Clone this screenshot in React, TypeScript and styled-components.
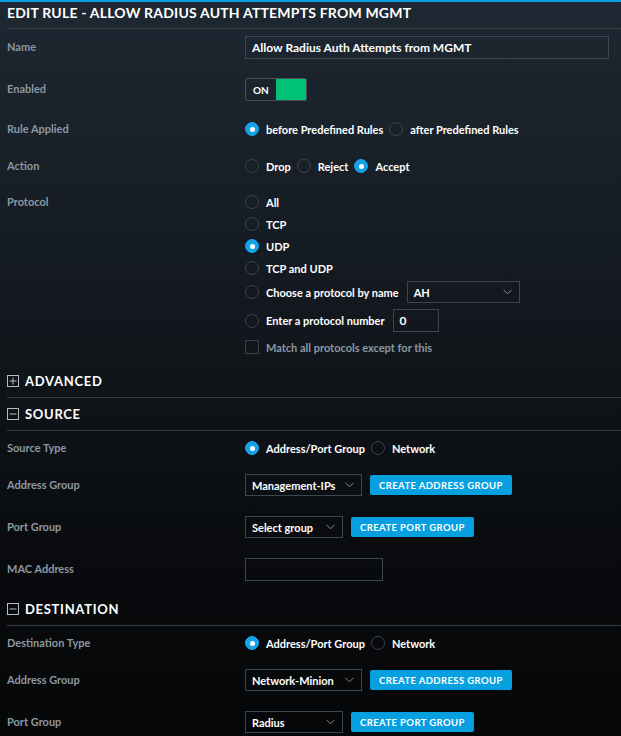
import React from "react";
import styled, { createGlobalStyle } from "styled-components";

const GlobalStyle = createGlobalStyle`
  html, body {
    margin: 0;
    padding: 0;
    height: 100%;
  }
  body {
    font-family: Lato, "Open Sans", sans-serif;
    background: #07080a;
  }
  #root {
    min-height: 100%;
  }
`;

const Page = styled.div`
  width: 621px;
  height: 736px;
  overflow: hidden;
  box-sizing: border-box;
  border-top: 2px solid #0a9ee0;
  background: linear-gradient(to bottom, #1e2832 0%, #12171d 45%, #090b0e 75%, #060708 100%);
  padding-left: 7px;
`;

const Title = styled.h1`
  box-sizing: border-box;
  margin: 0;
  height: 27px;
  padding-bottom: 5px;
  display: flex;
  align-items: center;
  border-bottom: 1px solid #3a444d;
  color: #ffffff;
  font-size: 14px;
  font-weight: 700;
  letter-spacing: 0.2px;
  text-transform: uppercase;
`;

const Row = styled.div<{ $top: number; $h?: number }>`
  display: flex;
  align-items: center;
  margin-top: ${(p) => p.$top}px;
  min-height: ${(p) => p.$h ?? 22}px;
`;

const Label = styled.div`
  width: 238px;
  flex-shrink: 0;
  color: #8c97a2;
  font-size: 11px;
  font-weight: 700;
  align-self: flex-start;
  line-height: 21px;
`;

const Field = styled.div`
  display: flex;
  align-items: center;
  gap: 8px;
`;

const TextInput = styled.div<{ $w: number; $size?: number }>`
  box-sizing: border-box;
  width: ${(p) => p.$w}px;
  height: 23px;
  border: 1px solid #3c464f;
  padding: 0 6px;
  display: flex;
  align-items: center;
  color: #fff;
  font-size: ${(p) => p.$size ?? 11}px;
  font-weight: 700;
`;

const Toggle = styled.div`
  box-sizing: border-box;
  width: 62px;
  height: 23px;
  border: 1px solid #46505a;
  border-radius: 2px;
  display: flex;
  overflow: hidden;
`;

const ToggleText = styled.div`
  flex: 1;
  display: flex;
  align-items: center;
  padding-left: 7px;
  color: #fff;
  font-size: 10px;
  font-weight: 700;
`;

const ToggleKnob = styled.div`
  width: 30px;
  background: #00c274;
`;

const RadioGroup = styled.div<{ $column?: boolean }>`
  display: flex;
  flex-direction: ${(p) => (p.$column ? "column" : "row")};
  align-items: ${(p) => (p.$column ? "flex-start" : "center")};
  gap: ${(p) => (p.$column ? 0 : 6)}px;
`;

const Option = styled.label<{ $pad?: number; $muted?: boolean }>`
  display: flex;
  align-items: center;
  gap: 7px;
  min-height: 22px;
  padding: ${(p) => p.$pad ?? 0}px 0;
  color: ${(p) => (p.$muted ? "#8c97a2" : "#ffffff")};
  font-size: 11px;
  font-weight: 700;
`;

const Radio = styled.span<{ $on?: boolean }>`
  box-sizing: border-box;
  width: 14px;
  height: 14px;
  border-radius: 50%;
  flex-shrink: 0;
  border: 1px solid ${(p) => (p.$on ? "#14a3e8" : "#3a434c")};
  background: ${(p) => (p.$on ? "#14a3e8" : "transparent")};
  display: flex;
  align-items: center;
  justify-content: center;

  &::after {
    content: "";
    display: ${(p) => (p.$on ? "block" : "none")};
    width: 5px;
    height: 5px;
    border-radius: 50%;
    background: #fff;
  }
`;

const Checkbox = styled.span`
  box-sizing: border-box;
  width: 14px;
  height: 14px;
  border: 1px solid #3a434c;
  border-radius: 1px;
  flex-shrink: 0;
`;

const Inline = styled.div`
  display: flex;
  align-items: center;
  gap: 8px;
`;

const Select = styled.div<{ $w: number }>`
  box-sizing: border-box;
  width: ${(p) => p.$w}px;
  height: 22px;
  border: 1px solid #3c464f;
  padding: 0 7px 0 6px;
  display: flex;
  align-items: center;
  justify-content: space-between;
  color: #fff;
  font-size: 11px;
  font-weight: 700;
`;

const Button = styled.button`
  height: 20px;
  border: none;
  border-radius: 2px;
  background: #06a0e0;
  color: #fff;
  font-family: inherit;
  font-size: 9.5px;
  font-weight: 700;
  letter-spacing: 0.4px;
  text-transform: uppercase;
  padding: 0 9px;
`;

const SectionHead = styled.div<{ $top: number }>`
  margin-top: ${(p) => p.$top}px;
  height: 32px;
  display: flex;
  align-items: center;
  gap: 6px;
  border-bottom: 1px solid #333c44;
  color: #fff;
  font-size: 13px;
  font-weight: 700;
  letter-spacing: 0.7px;
  text-transform: uppercase;
`;

const Chevron = () => (
  <svg width="9" height="6" viewBox="0 0 9 6">
    <path d="M0.5 0.8 L4.5 4.8 L8.5 0.8" fill="none" stroke="#8c97a2" strokeWidth="0.9" />
  </svg>
);

const BoxIcon = ({ plus }: { plus?: boolean }) => (
  <svg width="12" height="12" viewBox="0 0 12 12">
    <rect x="0.5" y="0.5" width="11" height="11" fill="none" stroke="#b4bcc4" strokeWidth="1" />
    <path d="M2.5 6 H9.5" stroke="#b4bcc4" strokeWidth="1" />
    {plus && <path d="M6 2.5 V9.5" stroke="#b4bcc4" strokeWidth="1" />}
  </svg>
);

const GroupRows = ({ address, port }: { address: string; port: string }) => (
  <>
    <Row $top={15}>
      <Label>Address Group</Label>
      <Field>
        <Select $w={117}>
          {address}
          <Chevron />
        </Select>
        <Button>Create Address Group</Button>
      </Field>
    </Row>
    <Row $top={20}>
      <Label>Port Group</Label>
      <Field>
        <Select $w={98}>
          {port}
          <Chevron />
        </Select>
        <Button>Create Port Group</Button>
      </Field>
    </Row>
  </>
);

export default function App() {
  return (
    <>
      <GlobalStyle />
      <Page>
        <Title>Edit Rule - Allow Radius Auth Attempts from MGMT</Title>

        <Row $top={7} $h={23}>
          <Label>Name</Label>
          <TextInput $w={364} $size={12}>Allow Radius Auth Attempts from MGMT</TextInput>
        </Row>

        <Row $top={19} $h={23}>
          <Label>Enabled</Label>
          <Toggle>
            <ToggleText>ON</ToggleText>
            <ToggleKnob />
          </Toggle>
        </Row>

        <Row $top={17}>
          <Label>Rule Applied</Label>
          <RadioGroup>
            <Option><Radio $on />before Predefined Rules</Option>
            <Option><Radio />after Predefined Rules</Option>
          </RadioGroup>
        </Row>

        <Row $top={15}>
          <Label>Action</Label>
          <RadioGroup>
            <Option><Radio />Drop</Option>
            <Option><Radio />Reject</Option>
            <Option><Radio $on />Accept</Option>
          </RadioGroup>
        </Row>

        <Row $top={14}>
          <Label>Protocol</Label>
          <RadioGroup $column>
            <Option><Radio />All</Option>
            <Option><Radio />TCP</Option>
            <Option><Radio $on />UDP</Option>
            <Option><Radio />TCP and UDP</Option>
            <Option $pad={2}>
              <Radio />
              <Inline>
                Choose a protocol by name
                <Select $w={113}>
                  AH
                  <Chevron />
                </Select>
              </Inline>
            </Option>
            <Option $pad={4}>
              <Radio />
              <Inline>
                Enter a protocol number
                <TextInput $w={46} $size={12}>0</TextInput>
              </Inline>
            </Option>
            <Option $muted><Checkbox />Match all protocols except for this</Option>
          </RadioGroup>
        </Row>

        <SectionHead $top={7}><BoxIcon plus />Advanced</SectionHead>
        <SectionHead $top={0}><BoxIcon />Source</SectionHead>

        <Row $top={6}>
          <Label>Source Type</Label>
          <RadioGroup>
            <Option><Radio $on />Address/Port Group</Option>
            <Option><Radio />Network</Option>
          </RadioGroup>
        </Row>
        <GroupRows address="Management-IPs" port="Select group" />
        <Row $top={20}>
          <Label>MAC Address</Label>
          <TextInput $w={138} />
        </Row>

        <SectionHead $top={12}><BoxIcon />Destination</SectionHead>

        <Row $top={6}>
          <Label>Destination Type</Label>
          <RadioGroup>
            <Option><Radio $on />Address/Port Group</Option>
            <Option><Radio />Network</Option>
          </RadioGroup>
        </Row>
        <GroupRows address="Network-Minion" port="Radius" />
      </Page>
    </>
  );
}
